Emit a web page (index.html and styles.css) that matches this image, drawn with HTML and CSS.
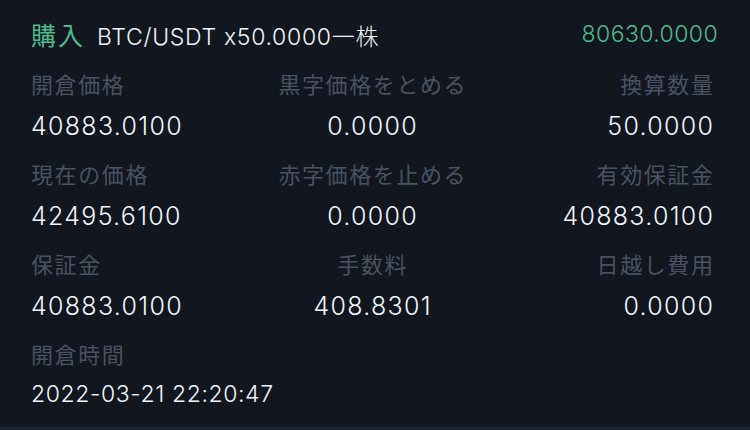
FILE: index.html
```html
<!DOCTYPE html>
<html>
<head>
  <meta charset="UTF-8">
  <title>ポジション詳細</title>
  <link rel="stylesheet" href="styles.css">
</head>
<body>
  <div class="position-card">
    <div class="card-header">
      <div class="header-title">
        <span class="side buy">購入</span>
        <span class="symbol">BTC/USDT x50.0000一株</span>
      </div>
      <span class="total">80630.0000</span>
    </div>

    <div class="detail-grid">
      <div class="cell">
        <div class="label">開倉価格</div>
        <div class="value">40883.0100</div>
      </div>
      <div class="cell center">
        <div class="label">黒字価格をとめる</div>
        <div class="value">0.0000</div>
      </div>
      <div class="cell right">
        <div class="label">換算数量</div>
        <div class="value">50.0000</div>
      </div>

      <div class="cell">
        <div class="label">現在の価格</div>
        <div class="value">42495.6100</div>
      </div>
      <div class="cell center">
        <div class="label">赤字価格を止める</div>
        <div class="value">0.0000</div>
      </div>
      <div class="cell right">
        <div class="label">有効保証金</div>
        <div class="value">40883.0100</div>
      </div>

      <div class="cell">
        <div class="label">保証金</div>
        <div class="value">40883.0100</div>
      </div>
      <div class="cell center">
        <div class="label">手数料</div>
        <div class="value">408.8301</div>
      </div>
      <div class="cell right">
        <div class="label">日越し費用</div>
        <div class="value">0.0000</div>
      </div>

      <div class="cell">
        <div class="label">開倉時間</div>
        <div class="value time">2022-03-21 22:20:47</div>
      </div>
    </div>
  </div>
  <div class="bottom-line"></div>
</body>
</html>
```

FILE: styles.css
```css
:root {
  --bg-color: #11161f;
  --line-color: #1d2430;
  --text-color: #f2f4f7;
  --label-color: #4a5260;
  --buy-color: #4dbb8b;
}

html, body {
  margin: 0;
  padding: 0;
}

body {
  width: 750px;
  height: 430px;
  overflow: hidden;
  background-color: var(--bg-color);
  color: var(--text-color);
  font-family: Inter, "Noto Sans CJK JP", sans-serif;
  font-weight: 300;
  display: flex;
  flex-direction: column;
}

.position-card {
  flex: 1;
  padding: 15px 37px 0 31px;
}

/* 头部 */
.card-header {
  display: flex;
  align-items: center;
  justify-content: space-between;
  height: 38px;
  margin-right: -5px;
}

.header-title {
  display: flex;
  align-items: baseline;
  gap: 12px;
}

.side {
  font-size: 25px;
  letter-spacing: 2px;
  font-weight: 400;
}

.side.buy {
  color: var(--buy-color);
}

.symbol {
  font-size: 23px;
  letter-spacing: 0.7px;
}

.total {
  font-size: 23px;
  letter-spacing: 0.4px;
  color: var(--buy-color);
}

/* 明细 */
.detail-grid {
  display: grid;
  grid-template-columns: repeat(3, minmax(0, 1fr));
  row-gap: 16px;
  margin-top: 17px;
}

.cell.center {
  text-align: center;
}

.cell.right {
  text-align: right;
}

.label {
  font-size: 22px;
  line-height: 30px;
  letter-spacing: 1.6px;
  font-weight: 400;
  color: var(--label-color);
}

.cell.center .label {
  margin-right: -1.6px;
}

.cell.right .label {
  margin-right: -1.6px;
}

.value {
  margin-top: 8px;
  font-size: 25px;
  line-height: 36px;
  letter-spacing: 1.3px;
}

.cell.center .value,
.cell.right .value {
  margin-right: -1.3px;
}

.value.time {
  font-size: 23px;
  letter-spacing: 0.6px;
  white-space: nowrap;
  margin-top: 6px;
}

.bottom-line {
  height: 3px;
  background-color: var(--line-color);
}
```
